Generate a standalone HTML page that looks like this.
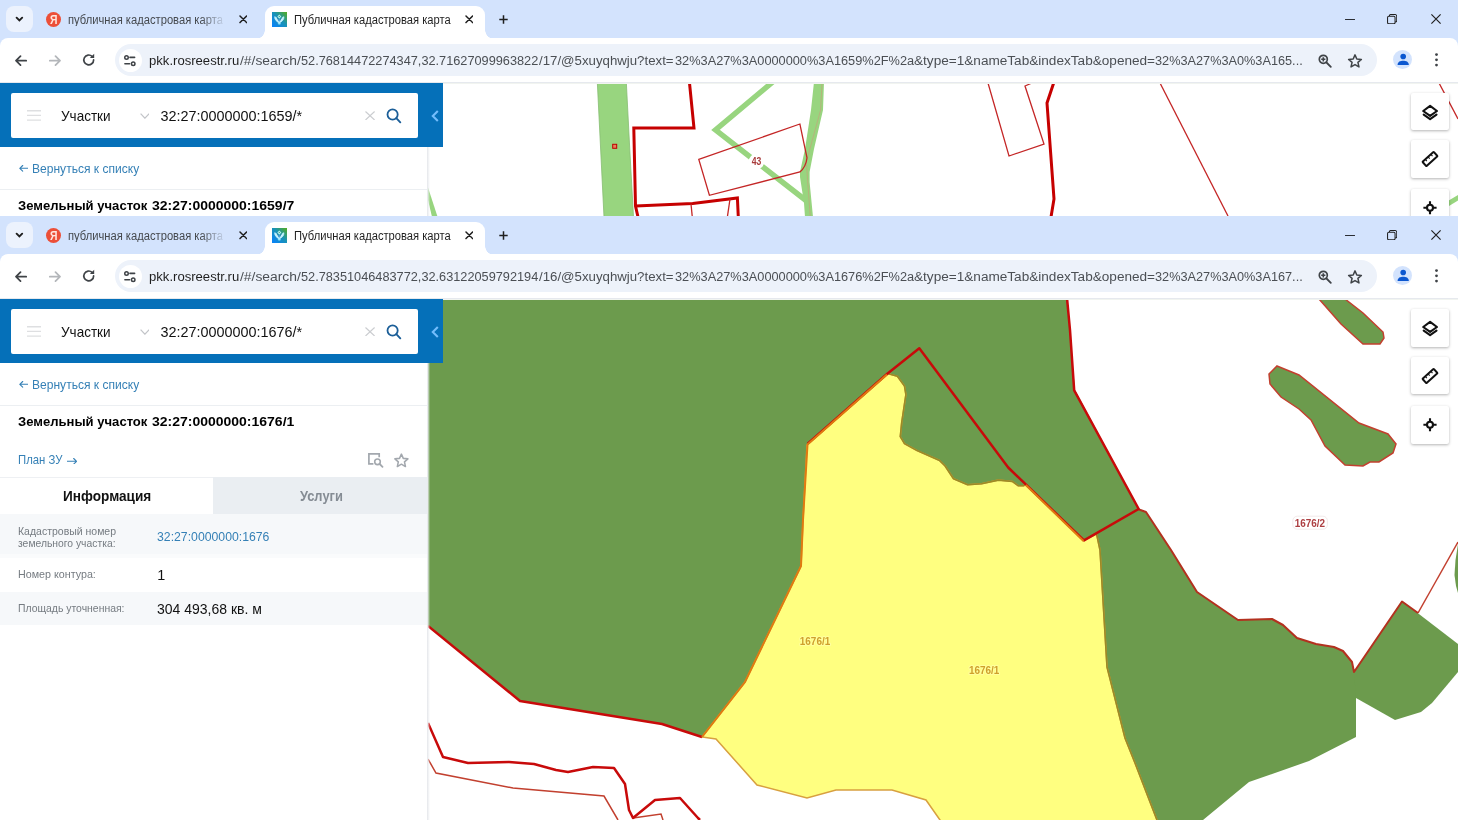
<!DOCTYPE html>
<html><head><meta charset="utf-8"><title>pkk</title><style>
*{box-sizing:border-box;margin:0;padding:0}
html,body{width:1458px;height:820px;overflow:hidden;background:#fff}
body{font-family:"Liberation Sans",sans-serif;position:relative;color:#1f1f1f}
.win{position:absolute;left:0;width:1458px;overflow:hidden;background:#fff}
.abs{position:absolute}
.t{position:absolute;white-space:nowrap;line-height:1;transform-origin:0 0;opacity:.999}
.tabstrip{position:absolute;left:0;top:0;width:1458px;height:50px;background:#d3e3fd}
.toolbar{position:absolute;left:0;top:38px;width:1458px;height:45px;background:#fff;border-bottom:1px solid #e6e9ee;border-radius:8px 8px 0 0}
.ddbtn{position:absolute;left:6.300px;top:6.300px;width:26.300px;height:25.700px;border-radius:8px;background:#ecf2fd}
.tab2{position:absolute;left:264.500px;top:5.500px;width:220px;height:33px;background:#fff;border-radius:9px 9px 0 0}
.tab2:before,.tab2:after{content:"";position:absolute;bottom:0;width:9px;height:9px}
.tab2:before{left:-9px;background:radial-gradient(circle at 0 0,rgba(255,255,255,0) 8.500px,#fff 9px)}
.tab2:after{right:-9px;background:radial-gradient(circle at 100% 0,rgba(255,255,255,0) 8.500px,#fff 9px)}
.omni{position:absolute;left:115px;top:44px;width:1262px;height:32px;border-radius:16px;background:#edf2fa}
.sitei{position:absolute;left:118.8px;top:49.2px;width:22.8px;height:22.8px;border-radius:12px;background:#fff}
.hdr{position:absolute;left:0;top:83px;width:442.900px;height:64.100px;background:#0570b9}
.sbox{position:absolute;left:11.400px;top:92.900px;width:406.500px;height:45.600px;background:#fff;border-radius:2px}
.side{position:absolute;left:0;top:147px;width:428px;height:700px;background:#fff}
.sideedge{position:absolute;left:427.400px;top:147px;width:3px;height:700px;background:linear-gradient(90deg,#e4e6ea,rgba(236,238,241,.55) 60%,rgba(255,255,255,0))}
.map{position:absolute;left:428px;top:83px;width:1030px}
.mbtn{position:absolute;left:1411px;width:38px;height:37.600px;background:#fff;border-radius:2px;box-shadow:0 1px 3px rgba(0,0,0,.30)}
</style></head><body>
<div class="win" style="top:0;height:216px">
<div class="map" style="height:140px"><svg class="abs" style="left:0;top:0" width="1030" height="133" viewBox="428 83 1030 133">
<rect x="428" y="83" width="1030" height="133" fill="#fff"/>
<g fill="#98d57f" stroke="#86bd72" stroke-width="0.800">
<polygon points="597.300,82 626.300,82 629.600,146 633.500,217 604,217"/>
</g>
<g fill="#98d57f" stroke="none">
<polygon points="428,187.600 437.300,216 431.800,216 428,200"/>
<polygon points="1447,201.500 1458,195 1458,200.500 1449,206"/>
<polygon points="814,82 811,110 805,149 800,172 800,177 804,203 805,217 813,217 809.600,182 809.600,172 814,149 823,110 824,82"/>
</g>
<g fill="none" stroke="#98d57f" stroke-width="5.400" stroke-linejoin="miter">
<polyline points="775,80 715.500,130 806,200.500"/>
</g>
<g fill="none" stroke="#b9b07c" stroke-width="0.900">
<polyline points="822,83 820.600,110 806.300,162 810.200,216"/>
</g>
<rect x="612.700" y="144.300" width="4" height="4" fill="#e8825a" stroke="#c00000" stroke-width="1"/>
<g fill="none" stroke="#c60000" stroke-width="3" stroke-linejoin="miter">
<polyline points="689.400,82 694,128 633.800,128 635.500,206 638,217"/>
<polyline points="635.500,206 692.700,203.500 737.400,198 738.300,217"/>
<polyline points="1054,82 1047,103 1054,199 1051,217"/>
</g>
<g fill="none" stroke="#c42626" stroke-width="1.300">
<polyline points="691,204 692.200,216"/>
<polyline points="730,199 727.500,216"/>
<path d="M698.800 159.400 L799.900 124 L807 157.800 Q806 167 799.900 172 L709.400 195.300 Z"/>
<polyline points="988,83 1009,156 1044,144 1025,86 1032,83"/>
<polyline points="1160,83 1228,216"/>
<polyline points="1439,83 1458,119"/>
</g>
<circle cx="756.600" cy="161.400" r="7.800" fill="#fff"/>
<text opacity="0.999" x="751.800" y="165" font-family="Liberation Sans, sans-serif" font-size="10.500" font-weight="bold" fill="#a83a3a" textLength="9.600" lengthAdjust="spacingAndGlyphs">43</text>
</svg>
</div>
<div class="side"></div><div class="sideedge"></div>
<div class="abs" style="left:0;top:189px;width:427px;height:1px;background:#eceff2"></div>
<svg class="abs" style="left:18.9px;top:165.2px" width="9.2" height="6.6" viewBox="0 0 9.2 6.6"><path d="M9 3.300 H0.900 M3.700 0.500 L0.800 3.300 L3.700 6.100" fill="none" stroke="#3580b6" stroke-width="1.100" stroke-linecap="round" stroke-linejoin="round"/></svg>
<div class="abs" style="left:442.9px;top:83px;width:1016px;height:1.1px;background:#f1f4f0"></div>
<div class="hdr"></div><div class="sbox"></div>
<svg class="abs" style="left:26.8px;top:110.3px" width="14.6" height="11" viewBox="0 0 14.6 11"><path d="M0 0.750 H14.600 M0 5.400 H14.600 M0 10.100 H14.600" stroke="#dedfe1" stroke-width="1.400"/></svg>
<svg class="abs" style="left:139.6px;top:112.8px" width="9.8" height="6.4" viewBox="0 0 9.8 6.4"><path d="M0.600 0.600 L4.900 5.200 L9.200 0.600" fill="none" stroke="#c2c4c8" stroke-width="1.200"/></svg>
<svg class="abs" style="left:365.1px;top:110.6px" width="10.1" height="9.5" viewBox="0 0 10.1 9.5"><path d="M0.500 0.500 L9.600 9 M9.600 0.500 L0.500 9" stroke="#cbcdd0" stroke-width="1.150"/></svg>
<svg class="abs" style="left:385.5px;top:107.9px" width="16" height="16.5" viewBox="0 0 16 16.5"><circle cx="6.600" cy="6.500" r="5.100" fill="none" stroke="#1b5e98" stroke-width="1.800"/><path d="M10.300 10.200 L14.300 14.300" stroke="#1b5e98" stroke-width="1.900" stroke-linecap="round"/></svg>
<svg class="abs" style="left:430.8px;top:109.6px" width="8" height="12" viewBox="0 0 8 12"><path d="M6.800 1 L1.800 6 L6.800 11" fill="none" stroke="#74bdfc" stroke-width="2.100"/></svg>
<div class="tabstrip"></div><div class="toolbar"></div>
<div class="ddbtn"></div>
<svg class="abs" style="left:15px;top:16.2px" width="9" height="7" viewBox="0 0 9 7"><path d="M1.6 1.7 L4.4 4.5 L7.2 1.7" fill="none" stroke="#1f1f1f" stroke-width="1.9" stroke-linecap="round" stroke-linejoin="miter"/></svg>
<div class="abs" style="left:45.500px;top:11.800px;width:15.600px;height:15.600px;border-radius:8px;background:#ec4f38"></div>
<div class="t" style="left:49.600px;top:13.600px;font-size:12.400px;font-weight:bold;color:#ffe6de;transform:scaleX(.84)">Я</div>
<svg class="abs" style="left:238.7px;top:15.4px" width="8.6" height="8.6" viewBox="0 0 8.6 8.6"><path d="M1 1 L7.6 7.6 M7.6 1 L1 7.6" stroke="#1f1f1f" stroke-width="1.5" stroke-linecap="round"/></svg>
<div class="tab2"></div>
<svg class="abs" style="left:272px;top:11.9px" width="15" height="15" viewBox="0 0 15 15"><defs><linearGradient id="fga" x1="0" y1="1" x2="1" y2="0"><stop offset="0.100" stop-color="#0a84f2"/><stop offset="0.550" stop-color="#1a93b4"/><stop offset="0.950" stop-color="#4faa2c"/></linearGradient></defs><rect width="15" height="15" fill="url(#fga)"/><path d="M7.300 10.800 C4.800 9.800 2.400 7.600 2.700 4.700 C4.600 5.400 6.600 7.400 7.300 10.800 Z M7.300 10.800 C9.800 9.800 12.200 7.600 11.900 4.700 C10 5.400 8 7.400 7.300 10.800 Z" fill="#c4f2ff" stroke="#c4f2ff" stroke-width="0.700" stroke-linejoin="round"/><path d="M7.300 9 L5.300 6.200 M7.300 9 L9.400 6.200" stroke="#2a7f9a" stroke-width="0.900" fill="none"/><path d="M7.300 2.500 L9.300 4.600 L7.300 6.700 L5.300 4.600 Z" fill="#b5f0e6"/><circle cx="7.300" cy="4.500" r="0.600" fill="#2d8a7a"/><ellipse cx="7.300" cy="11.800" rx="1.600" ry="0.800" fill="#9cecff"/><circle cx="7.300" cy="8.300" r="1.100" fill="#4aa0e0"/></svg>
<svg class="abs" style="left:464.7px;top:15.4px" width="8.6" height="8.6" viewBox="0 0 8.6 8.6"><path d="M1 1 L7.6 7.6 M7.6 1 L1 7.6" stroke="#1f1f1f" stroke-width="1.5" stroke-linecap="round"/></svg>
<svg class="abs" style="left:498.5px;top:15.2px" width="9" height="9" viewBox="0 0 9 9"><path d="M4.500 0.300 V8.700 M0.300 4.500 H8.700" stroke="#1f1f1f" stroke-width="1.500"/></svg>
<svg class="abs" style="left:1345px;top:18.9px" width="10" height="1.4" viewBox="0 0 10 1.4"><path d="M0 0.7 H10" stroke="#2a2d33" stroke-width="1.4"/></svg>
<svg class="abs" style="left:1387.2px;top:13.9px" width="10.3" height="10.3" viewBox="0 0 11 11"><rect x="0.600" y="2.400" width="8" height="8" rx="1.300" fill="none" stroke="#1f1f1f" stroke-width="1.100"/><path d="M2.600 2.200 V1.800 a1.200 1.200 0 0 1 1.200 -1.200 H8.800 a1.600 1.600 0 0 1 1.600 1.600 V7.200 a1.200 1.200 0 0 1 -1.200 1.200 H8.800" fill="none" stroke="#1f1f1f" stroke-width="1.100"/></svg>
<svg class="abs" style="left:1431.4px;top:13.7px" width="10" height="10" viewBox="0 0 10 10"><path d="M0.400 0.400 L9.600 9.600 M9.600 0.400 L0.400 9.600" stroke="#1f1f1f" stroke-width="1.150"/></svg>
<svg class="abs" style="left:15px;top:54.5px" width="12" height="11.4" viewBox="0 0 12 11.4"><path d="M11.3 5.7 H1.6 M5.5 1.2 L1 5.7 L5.5 10.2" fill="none" stroke="#3f4347" stroke-width="1.7" stroke-linecap="round" stroke-linejoin="round"/></svg>
<svg class="abs" style="left:48.7px;top:54.5px" width="12" height="11.4" viewBox="0 0 12 11.4"><path d="M0.7 5.7 H10.4 M6.5 1.2 L11 5.7 L6.5 10.2" fill="none" stroke="#b3b6ba" stroke-width="1.7" stroke-linecap="round" stroke-linejoin="round"/></svg>
<svg class="abs" style="left:82.2px;top:53.1px" width="14" height="14" viewBox="0 0 14 14"><path d="M11.6 6.9 A4.9 4.9 0 1 1 10.1 3.4" fill="none" stroke="#3f4347" stroke-width="1.7" stroke-linecap="round"/><path d="M12.2 0.8 V5.1 H7.9 Z" fill="#3f4347"/></svg>
<div class="omni"></div><div class="sitei"></div>
<svg class="abs" style="left:123.2px;top:53.9px" width="14" height="13" viewBox="0 0 14 13"><circle cx="3.5" cy="3.4" r="1.75" fill="none" stroke="#3f4347" stroke-width="1.5"/><path d="M7 3.4 H11.6" stroke="#3f4347" stroke-width="1.6" stroke-linecap="round"/><circle cx="10.2" cy="9.8" r="1.75" fill="none" stroke="#3f4347" stroke-width="1.5"/><path d="M1.9 9.8 H6.6" stroke="#3f4347" stroke-width="1.6" stroke-linecap="round"/></svg>
<svg class="abs" style="left:1318px;top:53.5px" width="14.5" height="14" viewBox="0 0 14.5 14"><circle cx="5.300" cy="5.300" r="4" fill="none" stroke="#3f4347" stroke-width="1.700"/><path d="M8.500 8.500 L12.800 12.800" stroke="#3f4347" stroke-width="1.800" stroke-linecap="round"/><path d="M3.200 5.300 H7.400 M5.300 3.200 V7.400" stroke="#3f4347" stroke-width="1.600"/></svg>
<svg class="abs" style="left:1346.4px;top:51.6px" width="18" height="18" viewBox="0 0 24 24"><path d="M12 3.800 L14.400 9.400 L20.500 9.900 L15.900 13.900 L17.300 19.900 L12 16.700 L6.700 19.900 L8.100 13.900 L3.500 9.900 L9.600 9.400 Z" fill="none" stroke="#3f4347" stroke-width="2" stroke-linejoin="round"/></svg>
<div class="abs" style="left:1393.400px;top:50.300px;width:18.800px;height:18.800px;border-radius:10px;background:#d3e3fd"></div>
<svg class="abs" style="left:1396.6px;top:53.4px" width="12.4" height="12.9" viewBox="0 0 11 11.500"><circle cx="5.500" cy="3.100" r="2.500" fill="#0b57d0"/><path d="M0.500 10.800 C0.500 7.800 3 7 5.500 7 C8 7 10.500 7.800 10.500 10.800 Z" fill="#0b57d0"/></svg>
<svg class="abs" style="left:1435.4px;top:53.2px" width="3" height="15" viewBox="0 0 3 15"><circle cx="1.500" cy="1.600" r="1.400" fill="#3f4347"/><circle cx="1.500" cy="6.800" r="1.400" fill="#3f4347"/><circle cx="1.500" cy="12.100" r="1.400" fill="#3f4347"/></svg>
<div class="mbtn" style="top:92.5px"><svg class="abs" style="left:0;top:0" width="38" height="38" viewBox="0 0 38 38"><path d="M19.100 12.900 L26 18 L19.100 22.900 L12.200 18 Z" fill="none" stroke="#111" stroke-width="2.100" stroke-linejoin="round"/><path d="M12.700 21.700 L19.100 26.200 L25.500 21.700" fill="none" stroke="#111" stroke-width="2.100" stroke-linejoin="round" stroke-linecap="round"/></svg></div>
<div class="mbtn" style="top:140.1px"><svg class="abs" style="left:0;top:0" width="38" height="38" viewBox="0 0 38 38"><g transform="rotate(-42 19 19)"><rect x="11.500" y="16" width="15" height="6" rx="0.600" fill="none" stroke="#111" stroke-width="2"/><path d="M15.200 16.200 V18.500 M19 16.200 V18.500 M22.800 16.200 V18.500" stroke="#111" stroke-width="1.100"/></g></svg></div>
<div class="mbtn" style="top:189.4px"><svg class="abs" style="left:0;top:0" width="38" height="38" viewBox="0 0 38 38"><circle cx="19" cy="18.800" r="3" fill="none" stroke="#111" stroke-width="2.100"/><path d="M19 12.300 V15.800 M19 21.800 V25.300 M12.400 18.800 H16 M22 18.800 H25.600" stroke="#111" stroke-width="2.100"/></svg></div>
<div class="t" style="left:67.87px;top:13.84px;font-size:12px;color:#45494e;transform:scaleX(0.9321);-webkit-mask-image:linear-gradient(90deg,#000 86%,rgba(0,0,0,0.15) 100%);mask-image:linear-gradient(90deg,#000 86%,rgba(0,0,0,0.15) 100%)">публичная кадастровая карта</div>
<div class="t" style="left:293.77px;top:13.84px;font-size:12px;color:#1f1f1f;transform:scaleX(0.9317)">Публичная кадастровая карта</div>
<div class="t" style="left:61.37px;top:108.64px;font-size:14.6px;color:#111;transform:scaleX(0.9269)">Участки</div>
<div class="t" style="left:31.95px;top:163.15px;font-size:12.7px;color:#3580b6;transform:scaleX(0.9500)">Вернуться к списку</div>
<div class="t" style="left:148.84px;top:54.20px;font-size:13.7px;color:#1f1f1f;transform:scaleX(0.9570)">pkk.rosreestr.ru</div>
<div class="t" style="left:239.60px;top:54.20px;font-size:13.7px;color:#4b4f54;transform:scaleX(1.0117)">/#/search/</div>
<div class="t" style="left:300.77px;top:54.20px;font-size:13.7px;color:#4b4f54;transform:scaleX(0.9303)">52.76814472274347,32.71627099963822</div>
<div class="t" style="left:539.00px;top:54.20px;font-size:13.7px;color:#4b4f54;transform:scaleX(0.9676)">/17/@5xuyqhwju?text=</div>
<div class="t" style="left:674.97px;top:54.20px;font-size:13.7px;color:#4b4f54;transform:scaleX(0.9322)">32%3A27%3A0000000%3A1659%2F%2a</div>
<div class="t" style="left:914.20px;top:54.20px;font-size:13.7px;color:#4b4f54;transform:scaleX(0.9930)">&amp;type=1&amp;nameTab&amp;indexTab&amp;opened=</div>
<div class="t" style="left:1155.07px;top:54.20px;font-size:13.7px;color:#4b4f54;transform:scaleX(0.9287)">32%3A27%3A0%3A165...</div>
<div class="t" style="left:160.50px;top:109.01px;font-size:14.4px;color:#111;transform:scaleX(1.0000)">32:27:0000000:1659/*</div>
<div class="t" style="left:18.32px;top:198.56px;font-size:13.4px;font-weight:bold;color:#000;transform:scaleX(0.9758)">Земельный участок</div>
<div class="t" style="left:151.76px;top:198.56px;font-size:13.4px;font-weight:bold;color:#000;transform:scaleX(1.0444)">32:27:0000000:1659/7</div>
</div>
<div class="win" style="top:216px;height:604px">
<div class="map" style="height:521px"><svg class="abs" style="left:0;top:0" width="1030" height="521" viewBox="428 299 1030 521">
<rect x="428" y="299" width="1030" height="521" fill="#fff"/>
<g fill="#6c9b4d" stroke="none">
<!-- big green -->
<polygon points="428,299 1067,299 1075,390 1139,509 1100,550 1000,600 850,600 745,682 702,737 662,724 520,701 428,626"/>
<polygon points="1090,538 1139,509 1146,512 1171,550 1197,592 1238,620 1272,619 1283,625 1297,638 1316,644 1334,647 1343,651 1352,662 1354,672 1356,672 1356,737 1309,761 1249,782 1203,820 1150,820 1130,763 1120,738 1104,667 1098,550"/>
<!-- pentagon right -->
<polygon points="1354,672 1402,601 1458,644 1458,672 1432,703 1421,712 1395,720 1356,698"/>
<polygon points="1458,544 1455.500,560 1454.500,575 1456,586 1458,593"/>
<!-- islands -->
<polygon points="1319,299 1345,299 1363,313 1383,332 1384,338 1380,344 1363,344 1341,324"/>
<polygon points="1277,366 1299,375 1359,423 1388,434 1396,444 1393,453 1379,462 1370,462 1363,466 1345,465 1325,446 1311,420 1299,409 1281,397 1270,384 1269,374"/>
</g>
<!-- yellow -->
<polygon fill="#ffff80" stroke="#d8a040" stroke-width="1.500" points="887.600,373.500 897.400,376.300 904.500,386.100 905.900,394.500 901.700,422.600 900.300,436.600 904.500,443.600 917.100,450.600 939.500,460.400 945.100,466 953.500,478.700 967.600,484.800 981.600,483.700 998.400,480.100 1012.500,481.500 1018.100,485.700 1023.700,485.700 1025.100,483.700 1084,540.400 1096.600,534 1100,550 1107,667 1125,738 1135,763 1157,820 1161,830 947,830 940,820 926,800 892,790 836,790 807,798 757,785 716,739 702,737 745,682 801,566 803,520 807,445"/>
<!-- island outlines -->
<g fill="none" stroke="#c2402f" stroke-width="1.5">
<polyline points="1345,299 1363,313 1383,332 1384,338 1380,344 1363,344 1341,324 1319,299"/>
<polygon points="1277,366 1299,375 1359,423 1388,434 1396,444 1393,453 1379,462 1370,462 1363,466 1345,465 1325,446 1311,420 1299,409 1281,397 1270,384 1269,374"/>
<polyline points="1418,613 1458,542"/>
<polyline points="428,759 436,773 513,788 604,796 618,820"/>
<polyline points="633,818 661,814 663,820"/>
</g>
<g fill="none" stroke="#b3311f" stroke-width="2" stroke-linejoin="round">
<polyline points="1139,509.500 1146,512 1171,550 1197,592 1238,620 1272,619 1283,625 1297,638 1316,644 1334,647 1343,651 1352,662 1354,672 1402,601.5 1418,613"/>
</g>
<g fill="none" stroke="#9c8a26" stroke-width="1.6" stroke-linejoin="round">
<polyline points="1096.6,534 1100,550 1107,667 1125,738 1135,763 1157,820"/>
<polyline points="887.6,373.5 897.4,376.3 904.5,386.1 905.9,394.5 901.7,422.6 900.3,436.6 904.5,443.6 917.1,450.6 939.5,460.4 945.1,466 953.5,478.7 967.6,484.8 981.6,483.7 998.4,480.1 1012.5,481.5 1018.1,485.7 1023.7,485.7 1025.1,483.7"/>
</g>
<!-- thick red -->
<g fill="none" stroke="#c80a0a" stroke-width="2.5" stroke-linejoin="round">
<polyline points="1067,298 1070,330 1074.200,390.300 1138.700,509 1084,540.400 1025,483.700 1008.200,467.500 919.300,348.200 887.600,373.500 807.700,443.600"/>
<polyline points="428,626 520,701 662,724 702,737"/>
<polyline points="428,723 443,757 468,763 509,762 534,764 556,770 568,772 593,767 614,768 625,784 629,810 633,818 655,800 680,798 698,818 700,820"/>
</g>
<g fill="none" stroke="#e07a10" stroke-width="2">
<polyline points="887,374.500 807.500,444.500 803,520 801,566 745,682 702,737"/>
<polyline points="1025.800,485 1083.500,541"/>
</g>
<!-- labels -->
<g font-family="Liberation Sans, sans-serif" font-weight="bold" opacity="0.999">
<rect x="1292.800" y="516.200" width="34.600" height="13" rx="4.500" fill="#fff" stroke="#efe3e3" stroke-width="0.800"/>
<text x="1294.700" y="527.200" font-size="11.400" fill="#ad3f42" textLength="30.400" lengthAdjust="spacingAndGlyphs">1676/2</text>
<g font-size="10.600" fill="#cfa02c" stroke="#ffff9e" stroke-width="2.200" stroke-linejoin="round" paint-order="stroke">
<text x="799.800" y="644.700" textLength="30.400" lengthAdjust="spacingAndGlyphs">1676/1</text>
<text x="969" y="673.500" textLength="30.400" lengthAdjust="spacingAndGlyphs">1676/1</text>
</g>
</g>
</svg>
</div>
<div class="side"></div><div class="sideedge"></div>
<div class="abs" style="left:0;top:189px;width:427px;height:1px;background:#eceff2"></div>
<svg class="abs" style="left:18.9px;top:165.2px" width="9.2" height="6.6" viewBox="0 0 9.2 6.6"><path d="M9 3.300 H0.900 M3.700 0.500 L0.800 3.300 L3.700 6.100" fill="none" stroke="#3580b6" stroke-width="1.100" stroke-linecap="round" stroke-linejoin="round"/></svg>
<svg class="abs" style="left:66.7px;top:241.5px" width="10.4" height="6.6" viewBox="0 0 10.4 6.6"><path d="M0.200 3.300 H9.500 M6.700 0.500 L9.600 3.300 L6.700 6.100" fill="none" stroke="#3580b6" stroke-width="1.100" stroke-linecap="round" stroke-linejoin="round"/></svg>
<svg class="abs" style="left:368px;top:237px" width="15.5" height="15" viewBox="0 0 15.5 15"><path d="M5.4 10.8 H0.9 V0.9 H11.2 V4.2" fill="none" stroke="#a3a8ae" stroke-width="1.7"/><circle cx="9.5" cy="8.8" r="2.8" fill="none" stroke="#a3a8ae" stroke-width="1.6"/><path d="M11.7 11 L14.5 13.8" stroke="#a3a8ae" stroke-width="1.8" stroke-linecap="round"/></svg>
<svg class="abs" style="left:392.6px;top:236.1px" width="16.8" height="16.8" viewBox="0 0 24 24"><path d="M12 3 L14.7 9.1 L21.3 9.8 L16.4 14.2 L17.8 20.8 L12 17.4 L6.2 20.8 L7.6 14.2 L2.7 9.8 L9.3 9.1 Z" fill="none" stroke="#a3a8ae" stroke-width="2.2" stroke-linejoin="round"/></svg>
<div class="abs" style="left:0;top:260.500px;width:427px;height:1px;background:#eef0f3"></div>
<div class="abs" style="left:213px;top:261px;width:214px;height:36.700px;background:#eaeef2"></div>
<div class="abs" style="left:0;top:297.7px;width:427px;height:40.3px;background:#f6f8fa"></div><div class="abs" style="left:0;top:338px;width:427px;height:4.2px;background:#fafbfc"></div>
<div class="abs" style="left:0;top:375.800px;width:427px;height:33.600px;background:#f6f8fa"></div>
<div class="abs" style="left:442.9px;top:83px;width:1016px;height:1.1px;background:#f1f4f0"></div>
<div class="hdr"></div><div class="sbox"></div>
<svg class="abs" style="left:26.8px;top:110.3px" width="14.6" height="11" viewBox="0 0 14.6 11"><path d="M0 0.750 H14.600 M0 5.400 H14.600 M0 10.100 H14.600" stroke="#dedfe1" stroke-width="1.400"/></svg>
<svg class="abs" style="left:139.6px;top:112.8px" width="9.8" height="6.4" viewBox="0 0 9.8 6.4"><path d="M0.600 0.600 L4.900 5.200 L9.200 0.600" fill="none" stroke="#c2c4c8" stroke-width="1.200"/></svg>
<svg class="abs" style="left:365.1px;top:110.6px" width="10.1" height="9.5" viewBox="0 0 10.1 9.5"><path d="M0.500 0.500 L9.600 9 M9.600 0.500 L0.500 9" stroke="#cbcdd0" stroke-width="1.150"/></svg>
<svg class="abs" style="left:385.5px;top:107.9px" width="16" height="16.5" viewBox="0 0 16 16.5"><circle cx="6.600" cy="6.500" r="5.100" fill="none" stroke="#1b5e98" stroke-width="1.800"/><path d="M10.300 10.200 L14.300 14.300" stroke="#1b5e98" stroke-width="1.900" stroke-linecap="round"/></svg>
<svg class="abs" style="left:430.8px;top:109.6px" width="8" height="12" viewBox="0 0 8 12"><path d="M6.800 1 L1.800 6 L6.800 11" fill="none" stroke="#74bdfc" stroke-width="2.100"/></svg>
<div class="tabstrip"></div><div class="toolbar"></div>
<div class="ddbtn"></div>
<svg class="abs" style="left:15px;top:16.2px" width="9" height="7" viewBox="0 0 9 7"><path d="M1.6 1.7 L4.4 4.5 L7.2 1.7" fill="none" stroke="#1f1f1f" stroke-width="1.9" stroke-linecap="round" stroke-linejoin="miter"/></svg>
<div class="abs" style="left:45.500px;top:11.800px;width:15.600px;height:15.600px;border-radius:8px;background:#ec4f38"></div>
<div class="t" style="left:49.600px;top:13.600px;font-size:12.400px;font-weight:bold;color:#ffe6de;transform:scaleX(.84)">Я</div>
<svg class="abs" style="left:238.7px;top:15.4px" width="8.6" height="8.6" viewBox="0 0 8.6 8.6"><path d="M1 1 L7.6 7.6 M7.6 1 L1 7.6" stroke="#1f1f1f" stroke-width="1.5" stroke-linecap="round"/></svg>
<div class="tab2"></div>
<svg class="abs" style="left:272px;top:11.9px" width="15" height="15" viewBox="0 0 15 15"><defs><linearGradient id="fgb" x1="0" y1="1" x2="1" y2="0"><stop offset="0.100" stop-color="#0a84f2"/><stop offset="0.550" stop-color="#1a93b4"/><stop offset="0.950" stop-color="#4faa2c"/></linearGradient></defs><rect width="15" height="15" fill="url(#fgb)"/><path d="M7.300 10.800 C4.800 9.800 2.400 7.600 2.700 4.700 C4.600 5.400 6.600 7.400 7.300 10.800 Z M7.300 10.800 C9.800 9.800 12.200 7.600 11.900 4.700 C10 5.400 8 7.400 7.300 10.800 Z" fill="#c4f2ff" stroke="#c4f2ff" stroke-width="0.700" stroke-linejoin="round"/><path d="M7.300 9 L5.300 6.200 M7.300 9 L9.400 6.200" stroke="#2a7f9a" stroke-width="0.900" fill="none"/><path d="M7.300 2.500 L9.300 4.600 L7.300 6.700 L5.300 4.600 Z" fill="#b5f0e6"/><circle cx="7.300" cy="4.500" r="0.600" fill="#2d8a7a"/><ellipse cx="7.300" cy="11.800" rx="1.600" ry="0.800" fill="#9cecff"/><circle cx="7.300" cy="8.300" r="1.100" fill="#4aa0e0"/></svg>
<svg class="abs" style="left:464.7px;top:15.4px" width="8.6" height="8.6" viewBox="0 0 8.6 8.6"><path d="M1 1 L7.6 7.6 M7.6 1 L1 7.6" stroke="#1f1f1f" stroke-width="1.5" stroke-linecap="round"/></svg>
<svg class="abs" style="left:498.5px;top:15.2px" width="9" height="9" viewBox="0 0 9 9"><path d="M4.500 0.300 V8.700 M0.300 4.500 H8.700" stroke="#1f1f1f" stroke-width="1.500"/></svg>
<svg class="abs" style="left:1345px;top:18.9px" width="10" height="1.4" viewBox="0 0 10 1.4"><path d="M0 0.7 H10" stroke="#2a2d33" stroke-width="1.4"/></svg>
<svg class="abs" style="left:1387.2px;top:13.9px" width="10.3" height="10.3" viewBox="0 0 11 11"><rect x="0.600" y="2.400" width="8" height="8" rx="1.300" fill="none" stroke="#1f1f1f" stroke-width="1.100"/><path d="M2.600 2.200 V1.800 a1.200 1.200 0 0 1 1.200 -1.200 H8.800 a1.600 1.600 0 0 1 1.600 1.600 V7.200 a1.200 1.200 0 0 1 -1.200 1.200 H8.800" fill="none" stroke="#1f1f1f" stroke-width="1.100"/></svg>
<svg class="abs" style="left:1431.4px;top:13.7px" width="10" height="10" viewBox="0 0 10 10"><path d="M0.400 0.400 L9.600 9.600 M9.600 0.400 L0.400 9.600" stroke="#1f1f1f" stroke-width="1.150"/></svg>
<svg class="abs" style="left:15px;top:54.5px" width="12" height="11.4" viewBox="0 0 12 11.4"><path d="M11.3 5.7 H1.6 M5.5 1.2 L1 5.7 L5.5 10.2" fill="none" stroke="#3f4347" stroke-width="1.7" stroke-linecap="round" stroke-linejoin="round"/></svg>
<svg class="abs" style="left:48.7px;top:54.5px" width="12" height="11.4" viewBox="0 0 12 11.4"><path d="M0.7 5.7 H10.4 M6.5 1.2 L11 5.7 L6.5 10.2" fill="none" stroke="#b3b6ba" stroke-width="1.7" stroke-linecap="round" stroke-linejoin="round"/></svg>
<svg class="abs" style="left:82.2px;top:53.1px" width="14" height="14" viewBox="0 0 14 14"><path d="M11.6 6.9 A4.9 4.9 0 1 1 10.1 3.4" fill="none" stroke="#3f4347" stroke-width="1.7" stroke-linecap="round"/><path d="M12.2 0.8 V5.1 H7.9 Z" fill="#3f4347"/></svg>
<div class="omni"></div><div class="sitei"></div>
<svg class="abs" style="left:123.2px;top:53.9px" width="14" height="13" viewBox="0 0 14 13"><circle cx="3.5" cy="3.4" r="1.75" fill="none" stroke="#3f4347" stroke-width="1.5"/><path d="M7 3.4 H11.6" stroke="#3f4347" stroke-width="1.6" stroke-linecap="round"/><circle cx="10.2" cy="9.8" r="1.75" fill="none" stroke="#3f4347" stroke-width="1.5"/><path d="M1.9 9.8 H6.6" stroke="#3f4347" stroke-width="1.6" stroke-linecap="round"/></svg>
<svg class="abs" style="left:1318px;top:53.5px" width="14.5" height="14" viewBox="0 0 14.5 14"><circle cx="5.300" cy="5.300" r="4" fill="none" stroke="#3f4347" stroke-width="1.700"/><path d="M8.500 8.500 L12.800 12.800" stroke="#3f4347" stroke-width="1.800" stroke-linecap="round"/><path d="M3.200 5.300 H7.400 M5.300 3.200 V7.400" stroke="#3f4347" stroke-width="1.600"/></svg>
<svg class="abs" style="left:1346.4px;top:51.6px" width="18" height="18" viewBox="0 0 24 24"><path d="M12 3.800 L14.400 9.400 L20.500 9.900 L15.900 13.900 L17.300 19.900 L12 16.700 L6.700 19.900 L8.100 13.900 L3.500 9.900 L9.600 9.400 Z" fill="none" stroke="#3f4347" stroke-width="2" stroke-linejoin="round"/></svg>
<div class="abs" style="left:1393.400px;top:50.300px;width:18.800px;height:18.800px;border-radius:10px;background:#d3e3fd"></div>
<svg class="abs" style="left:1396.6px;top:53.4px" width="12.4" height="12.9" viewBox="0 0 11 11.500"><circle cx="5.500" cy="3.100" r="2.500" fill="#0b57d0"/><path d="M0.500 10.800 C0.500 7.800 3 7 5.500 7 C8 7 10.500 7.800 10.500 10.800 Z" fill="#0b57d0"/></svg>
<svg class="abs" style="left:1435.4px;top:53.2px" width="3" height="15" viewBox="0 0 3 15"><circle cx="1.500" cy="1.600" r="1.400" fill="#3f4347"/><circle cx="1.500" cy="6.800" r="1.400" fill="#3f4347"/><circle cx="1.500" cy="12.100" r="1.400" fill="#3f4347"/></svg>
<div class="mbtn" style="top:93.2px"><svg class="abs" style="left:0;top:0" width="38" height="38" viewBox="0 0 38 38"><path d="M19.100 12.900 L26 18 L19.100 22.900 L12.200 18 Z" fill="none" stroke="#111" stroke-width="2.100" stroke-linejoin="round"/><path d="M12.700 21.700 L19.100 26.200 L25.500 21.700" fill="none" stroke="#111" stroke-width="2.100" stroke-linejoin="round" stroke-linecap="round"/></svg></div>
<div class="mbtn" style="top:140.8px"><svg class="abs" style="left:0;top:0" width="38" height="38" viewBox="0 0 38 38"><g transform="rotate(-42 19 19)"><rect x="11.500" y="16" width="15" height="6" rx="0.600" fill="none" stroke="#111" stroke-width="2"/><path d="M15.200 16.200 V18.500 M19 16.200 V18.500 M22.800 16.200 V18.500" stroke="#111" stroke-width="1.100"/></g></svg></div>
<div class="mbtn" style="top:190.1px"><svg class="abs" style="left:0;top:0" width="38" height="38" viewBox="0 0 38 38"><circle cx="19" cy="18.800" r="3" fill="none" stroke="#111" stroke-width="2.100"/><path d="M19 12.300 V15.800 M19 21.800 V25.300 M12.400 18.800 H16 M22 18.800 H25.600" stroke="#111" stroke-width="2.100"/></svg></div>
<div class="t" style="left:67.87px;top:13.84px;font-size:12px;color:#45494e;transform:scaleX(0.9321);-webkit-mask-image:linear-gradient(90deg,#000 86%,rgba(0,0,0,0.15) 100%);mask-image:linear-gradient(90deg,#000 86%,rgba(0,0,0,0.15) 100%)">публичная кадастровая карта</div>
<div class="t" style="left:293.77px;top:13.84px;font-size:12px;color:#1f1f1f;transform:scaleX(0.9317)">Публичная кадастровая карта</div>
<div class="t" style="left:61.37px;top:108.64px;font-size:14.6px;color:#111;transform:scaleX(0.9269)">Участки</div>
<div class="t" style="left:31.95px;top:163.15px;font-size:12.7px;color:#3580b6;transform:scaleX(0.9500)">Вернуться к списку</div>
<div class="t" style="left:148.84px;top:54.20px;font-size:13.7px;color:#1f1f1f;transform:scaleX(0.9570)">pkk.rosreestr.ru</div>
<div class="t" style="left:239.60px;top:54.20px;font-size:13.7px;color:#4b4f54;transform:scaleX(1.0117)">/#/search/</div>
<div class="t" style="left:300.77px;top:54.20px;font-size:13.7px;color:#4b4f54;transform:scaleX(0.9303)">52.78351046483772,32.63122059792194</div>
<div class="t" style="left:539.00px;top:54.20px;font-size:13.7px;color:#4b4f54;transform:scaleX(0.9676)">/16/@5xuyqhwju?text=</div>
<div class="t" style="left:674.97px;top:54.20px;font-size:13.7px;color:#4b4f54;transform:scaleX(0.9322)">32%3A27%3A0000000%3A1676%2F%2a</div>
<div class="t" style="left:914.20px;top:54.20px;font-size:13.7px;color:#4b4f54;transform:scaleX(0.9930)">&amp;type=1&amp;nameTab&amp;indexTab&amp;opened=</div>
<div class="t" style="left:1155.07px;top:54.20px;font-size:13.7px;color:#4b4f54;transform:scaleX(0.9287)">32%3A27%3A0%3A167...</div>
<div class="t" style="left:160.50px;top:109.01px;font-size:14.4px;color:#111;transform:scaleX(1.0000)">32:27:0000000:1676/*</div>
<div class="t" style="left:18.32px;top:198.76px;font-size:13.4px;font-weight:bold;color:#000;transform:scaleX(0.9758)">Земельный участок</div>
<div class="t" style="left:151.76px;top:198.76px;font-size:13.4px;font-weight:bold;color:#000;transform:scaleX(1.0444)">32:27:0000000:1676/1</div>
<div class="t" style="left:18.31px;top:238.05px;font-size:12.7px;color:#3580b6;transform:scaleX(0.8939)">План ЗУ</div>
<div class="t" style="left:62.78px;top:272.57px;font-size:14.8px;font-weight:bold;color:#111;transform:scaleX(0.9191)">Информация</div>
<div class="t" style="left:299.60px;top:272.57px;font-size:14.8px;font-weight:bold;color:#858c94;transform:scaleX(0.8708)">Услуги</div>
<div class="t" style="left:18.24px;top:309.77px;font-size:10.9px;color:#757b81;transform:scaleX(0.9634)">Кадастровый номер</div>
<div class="t" style="left:18.25px;top:322.47px;font-size:10.9px;color:#757b81;transform:scaleX(0.9495)">земельного участка:</div>
<div class="t" style="left:157.25px;top:314.58px;font-size:12.9px;color:#3580b6;transform:scaleX(0.9504)">32:27:0000000:1676</div>
<div class="t" style="left:18.22px;top:353.47px;font-size:10.9px;color:#757b81;transform:scaleX(0.9844)">Номер контура:</div>
<div class="t" style="left:157.20px;top:352.01px;font-size:14.4px;color:#111;transform:scaleX(1.0000)">1</div>
<div class="t" style="left:18.24px;top:387.37px;font-size:10.9px;color:#757b81;transform:scaleX(0.9564)">Площадь уточненная:</div>
<div class="t" style="left:157.23px;top:385.51px;font-size:14.4px;color:#111;transform:scaleX(0.9726)">304 493,68 кв. м</div>
</div>
</body></html>
